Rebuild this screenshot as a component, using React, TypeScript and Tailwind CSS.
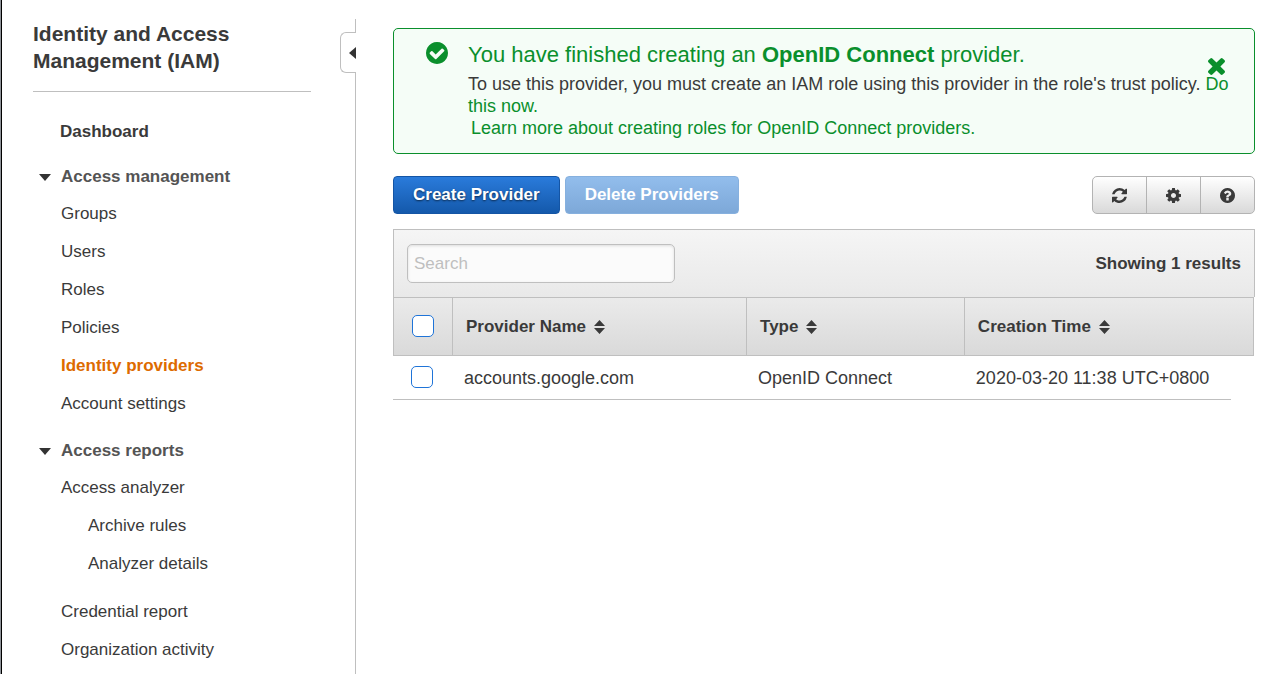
import { useState } from "react";

const ICONS = {
  refresh:
    "M1639 1056q0 5-1 7-64 268-268 434.5t-478 166.5q-146 0-282.5-55t-243.5-157l-129 129q-19 19-45 19t-45-19-19-45v-448q0-26 19-45t45-19h448q26 0 45 19t19 45-19 45l-137 137q71 66 161 102t187 36q134 0 250-65t186-179q11-17 53-117 8-23 30-23h192q13 0 22.5 9.5t9.5 22.5zm25-800v448q0 26-19 45t-45 19h-448q-26 0-45-19t-19-45 19-45l138-138q-148-137-349-137-134 0-250 65t-186 179q-11 17-53 117-8 23-30 23h-199q-13 0-22.5-9.5t-9.5-22.5v-7q65-268 270-434.5t480-166.5q146 0 284 55.5t245 156.5l130-129q19-19 45-19t45 19 19 45z",
  cog: "M1152 896q0-106-75-181t-181-75-181 75-75 181 75 181 181 75 181-75 75-181zm512-109v222q0 12-8 23t-20 13l-185 28q-19 54-39 91 35 50 107 138 10 12 10 25t-9 23q-27 37-99 108t-94 71q-12 0-26-9l-138-108q-44 23-91 38-16 136-29 186-7 28-36 28h-222q-14 0-24.5-8.5t-11.5-21.5l-28-184q-49-16-90-37l-141 107q-10 9-25 9-14 0-25-11-126-114-165-168-7-10-7-23 0-12 8-23 15-21 51-66.5t54-70.5q-27-50-41-99l-183-27q-13-2-21-12.5t-8-23.5v-222q0-12 8-23t19-13l186-28q14-46 39-92-40-57-107-138-10-12-10-24 0-10 9-23 26-36 98.5-107.5t94.5-71.5q13 0 26 10l138 107q44-23 91-38 16-136 29-186 7-28 36-28h222q14 0 24.5 8.5t11.5 21.5l28 184q49 16 90 37l142-107q9-9 24-9 13 0 25 10 129 119 165 170 7 8 7 22 0 12-8 23-15 21-51 66.5t-54 70.5q26 50 41 98l183 28q13 2 21 12.5t8 23.5z",
  help: "M1024 1376v-192q0-14-9-23t-23-9h-192q-14 0-23 9t-9 23v192q0 14 9 23t23 9h192q14 0 23-9t9-23zm256-672q0-88-55.5-163t-138.5-116-170-41q-243 0-371 213-15 24 8 42l132 100q7 6 19 6 16 0 25-12 53-68 86-92 34-24 86-24 48 0 85.5 26t37.5 59q0 38-20 61t-68 45q-63 28-115.5 86.5t-52.5 125.5v36q0 14 9 23t23 9h192q14 0 23-9t9-23q0-19 21.5-49.5t54.5-49.5q32-18 49-28.5t46-35 44.5-48 28-60.5 12.5-81zm384 192q0 209-103 385.5t-279.5 279.5-385.5 103-385.5-103-279.5-279.5-103-385.5 103-385.5 279.5-279.5 385.5-103 385.5 103 279.5 279.5 103 385.5z",
  check:
    "M1412 734q0-28-18-46l-91-90q-19-19-45-19t-45 19l-408 407-226-226q-19-19-45-19t-45 19l-91 90q-18 18-18 46 0 27 18 45l362 362q19 19 45 19 27 0 46-19l543-543q18-18 18-45zm252 162q0 209-103 385.5t-279.5 279.5-385.5 103-385.5-103-279.5-279.5-103-385.5 103-385.5 279.5-279.5 385.5-103 385.5 103 279.5 279.5 103 385.5z",
  close:
    "M1490 1322q0 40-28 68l-136 136q-28 28-68 28t-68-28l-294-294-294 294q-28 28-68 28t-68-28l-136-136q-28-28-28-68t28-68l294-294-294-294q-28-28-28-68t28-68l136-136q28-28 68-28t68 28l294 294 294-294q28-28 68-28t68 28l136 136q28 28 28 68t-28 68l-294 294 294 294q28 28 28 68z",
};

function Icon({ name, className }: { name: keyof typeof ICONS; className: string }) {
  const viewBox = name === "close" ? "302 366 1188 1188" : "128 128 1536 1536";
  return (
    <svg viewBox={viewBox} className={className} fill="currentColor" aria-hidden="true">
      <path d={ICONS[name]} />
    </svg>
  );
}

function SortIcon() {
  return (
    <svg viewBox="0 0 11 14" className="h-[14px] w-[11px]" fill="currentColor" aria-hidden="true">
      <path d="M5.5 0 11 6H0zM5.5 14 11 8H0z" />
    </svg>
  );
}

type NavItem = { label: string; nested?: boolean; active?: boolean; spaced?: boolean };

const MANAGEMENT: NavItem[] = [
  { label: "Groups" },
  { label: "Users" },
  { label: "Roles" },
  { label: "Policies" },
  { label: "Identity providers", active: true },
  { label: "Account settings" },
];

const REPORTS: NavItem[] = [
  { label: "Access analyzer" },
  { label: "Archive rules", nested: true },
  { label: "Analyzer details", nested: true },
  { label: "Credential report", spaced: true },
  { label: "Organization activity" },
];

function NavSection({ title, items }: { title: string; items: NavItem[] }) {
  const [open, setOpen] = useState(true);
  return (
    <section>
      <button
        type="button"
        aria-expanded={open}
        onClick={() => setOpen(!open)}
        className="flex h-9 items-center gap-[10px] pl-[6px] font-bold text-[#545454]"
      >
        <svg viewBox="0 0 12 7" className="h-[7px] w-[12px]" fill="#333" aria-hidden="true">
          <path d="M0 0h12L6 7z" />
        </svg>
        {title}
      </button>
      {open && (
        <ul>
          {items.map((item) => (
            <li
              key={item.label}
              className={`flex h-[38px] items-center ${item.nested ? "pl-[55px]" : "pl-[28px]"} ${item.spaced ? "mt-[10px]" : ""}`}
            >
              <a href="#" className={item.active ? "font-bold text-[#dd6b00]" : ""}>
                {item.label}
              </a>
            </li>
          ))}
        </ul>
      )}
    </section>
  );
}

const CHECKBOX =
  "block size-[22px] appearance-none rounded-[5px] border border-[#1f74d8] bg-white checked:bg-[#1f74d8]";
const HEAD_CELL = "border-y border-l border-[#bfbfbf] pl-[13px] text-left";
const BODY_CELL = "border-b border-[#bfbfbf] pl-3 text-[18px]";
const TOOL_BUTTON =
  "box-content flex w-[53px] items-center justify-center border-l border-[#b3b3b3] first:border-l-0";

export default function App() {
  const [alertOpen, setAlertOpen] = useState(true);
  return (
    <div className="flex min-h-screen overflow-hidden bg-white font-['Liberation_Sans',Arial,sans-serif] text-[17px] leading-[22px] text-[#3a3a3a]">
      <div className="w-[2px] shrink-0 border-l border-r border-l-[#8f9399] border-r-black" />

      <aside className="flex w-[354px] shrink-0">
        <div className="min-w-0 flex-1 pl-[31px] pt-5">
          <h1 className="w-[278px] border-b border-[#bfbfbf] pb-[17px] text-[21px] font-bold leading-[27px]">
            Identity and Access Management (IAM)
          </h1>
          <nav className="flex flex-col pt-[21px]">
            <a href="#" className="mb-2 flex h-[38px] items-center pl-[27px] font-bold">
              Dashboard
            </a>
            <div className="flex flex-col gap-[10px]">
              <NavSection title="Access management" items={MANAGEMENT} />
              <NavSection title="Access reports" items={REPORTS} />
            </div>
          </nav>
        </div>
        <div className="flex w-4 flex-col pt-[19px]">
          <div className="h-[13px] border-r border-[#bfbfbf]" />
          <button
            type="button"
            aria-label="Collapse navigation"
            className="flex h-[41px] items-center justify-end rounded-l-[6px] border border-r-0 border-[#bfbfbf]"
          >
            <svg viewBox="0 0 7 12" className="h-3 w-[7px]" fill="#333" aria-hidden="true">
              <path d="M7 0v12L0 6z" />
            </svg>
          </button>
          <div className="flex-1 border-r border-[#bfbfbf]" />
        </div>
      </aside>

      <main className="min-w-0 flex-1 pb-6 pl-[37px] pr-[15px] pt-7">
        {alertOpen && (
          <div
            role="status"
            className="relative mb-[22px] flex rounded-[5px] border border-[#0a8f2c] bg-[#f5fdf7] pb-[14px] pl-8 pr-[18px] pt-3 text-[#0a8f2c]"
          >
            <Icon name="check" className="mt-px size-[22px] shrink-0" />
            <div className="ml-5 min-w-0 text-[18px]">
              <h2 className="mb-[5px] text-[22px] leading-[27px]">
                You have finished creating an <b>OpenID Connect</b> provider.
              </h2>
              <p>
                <span className="text-[#3a3a3a]">
                  To use this provider, you must create an IAM role using this provider in the role's trust policy.{" "}
                </span>
                <a href="#">Do this now.</a>
              </p>
              <p className="pl-[3px]">
                <a href="#">Learn more about creating roles for OpenID Connect providers.</a>
              </p>
            </div>
            <button
              type="button"
              aria-label="Dismiss"
              onClick={() => setAlertOpen(false)}
              className="absolute right-[29px] top-[29px]"
            >
              <Icon name="close" className="size-[17px]" />
            </button>
          </div>
        )}

        <div className="flex h-[38px] justify-between">
          <div className="flex gap-[5px]">
            <button
              type="button"
              className="rounded-[4px] border border-[#1455a5] bg-linear-to-b from-[#2a7bdb] to-[#1459ab] px-[19px] font-bold text-white text-shadow-[0_1px_2px_rgb(0_0_0/0.6)]"
            >
              Create Provider
            </button>
            <button
              type="button"
              disabled
              className="rounded-[4px] border border-[#86b0de] bg-linear-to-b from-[#92bdec] to-[#7da8d8] px-[19px] font-bold text-white"
            >
              Delete Providers
            </button>
          </div>
          <div className="flex overflow-hidden rounded-[5px] border border-[#b3b3b3] bg-linear-to-b from-white to-[#d9d9d9]">
            <button type="button" aria-label="Refresh" className={TOOL_BUTTON}>
              <Icon name="refresh" className="size-[15px]" />
            </button>
            <button type="button" aria-label="Settings" className={TOOL_BUTTON}>
              <Icon name="cog" className="size-[15px]" />
            </button>
            <button type="button" aria-label="Help" className={TOOL_BUTTON}>
              <Icon name="help" className="size-[15px]" />
            </button>
          </div>
        </div>

        <div className="mt-[15px] flex h-[68px] items-center justify-between border border-b-0 border-[#bfbfbf] bg-linear-to-b from-[#f5f5f5] to-[#e9e9e9] px-[13px]">
          <input
            type="search"
            aria-label="Search"
            placeholder="Search"
            className="h-[39px] w-[268px] rounded-[5px] border border-[#bfbfbf] bg-[#fbfbfb] px-[6px] shadow-[inset_0_1px_3px_rgb(0_0_0/0.12)] placeholder:text-[#bfbfbf]"
          />
          <span className="font-bold">Showing 1 results</span>
        </div>
        <div className="pr-px">
          <table className="w-full table-fixed border-separate border-spacing-0">
            <colgroup>
              <col className="w-[59px]" />
              <col className="w-[34.15%]" />
              <col className="w-[25.3%]" />
              <col />
              <col className="w-[23px]" />
            </colgroup>
            <thead>
              <tr className="h-[59px] bg-linear-to-b from-[#ebebeb] to-[#d9d9d9]">
                <th className="border-y border-l border-[#bfbfbf] pb-[2px] pl-[18px]">
                  <input type="checkbox" aria-label="Select all providers" className={CHECKBOX} />
                </th>
                <th className={HEAD_CELL}>
                  <span className="flex items-center gap-2">
                    Provider Name <SortIcon />
                  </span>
                </th>
                <th className={HEAD_CELL}>
                  <span className="flex items-center gap-2">
                    Type <SortIcon />
                  </span>
                </th>
                <th colSpan={2} className={`${HEAD_CELL} border-r`}>
                  <span className="flex items-center gap-2">
                    Creation Time <SortIcon />
                  </span>
                </th>
              </tr>
            </thead>
            <tbody>
              <tr className="h-[44px]">
                <td className="border-b border-[#bfbfbf] pb-[2px] pl-[18px]">
                  <input type="checkbox" aria-label="Select accounts.google.com" className={CHECKBOX} />
                </td>
                <td className={BODY_CELL}>accounts.google.com</td>
                <td className={BODY_CELL}>OpenID Connect</td>
                <td className={BODY_CELL}>2020-03-20 11:38 UTC+0800</td>
                <td />
              </tr>
            </tbody>
          </table>
        </div>
      </main>
    </div>
  );
}
